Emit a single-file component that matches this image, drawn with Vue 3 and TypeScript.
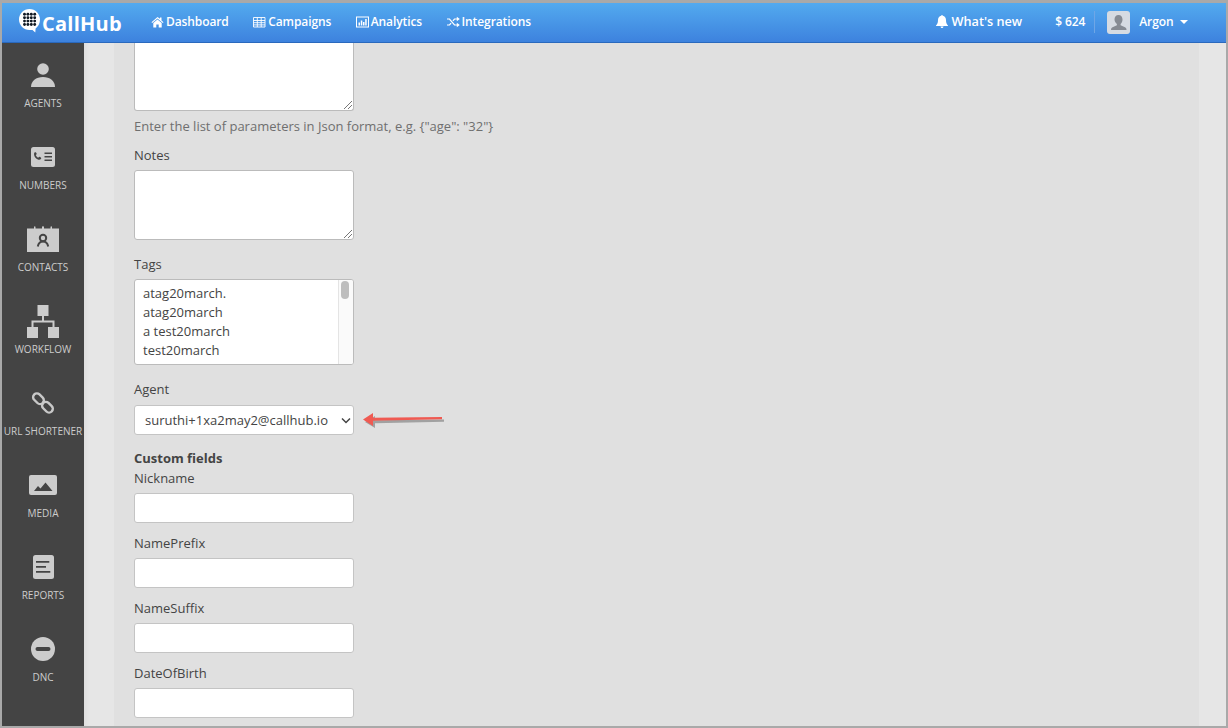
<script setup lang="ts">
const nav = [
  { label: 'Dashboard', icon: 'home' },
  { label: 'Campaigns', icon: 'table' },
  { label: 'Analytics', icon: 'chart' },
  { label: 'Integrations', icon: 'shuffle' },
]
const side = ['AGENTS', 'NUMBERS', 'CONTACTS', 'WORKFLOW', 'URL SHORTENER', 'MEDIA', 'REPORTS', 'DNC']
const tags = ['atag20march.', 'atag20march', 'a test20march', 'test20march']
const customFields = ['Nickname', 'NamePrefix', 'NameSuffix', 'DateOfBirth']
const dots = [0, 1, 2, 3]
</script>

<template>
  <div class="frame">
    <header class="topbar">
      <div class="logo">
        <svg class="logo-mark" width="22" height="24" viewBox="0 0 22 24">
          <path d="M10.500 0C4.700 0 0 4.700 0 10.500S4.700 21 10.500 21h3l2.800 2.600.3-4.100C19.200 17.600 21 14.300 21 10.500 21 4.700 16.300 0 10.500 0z" fill="#fff" />
          <g fill="#111a24">
            <template v-for="r in dots" :key="r">
              <circle v-for="c in dots" :key="c" :cx="5.500 + c * 3.400" :cy="5.300 + r * 3.400" r="1.450" />
            </template>
          </g>
        </svg>
        <span class="logo-text">CallHub</span>
      </div>
      <nav class="nav">
        <a v-for="n in nav" :key="n.label" class="nav-item">
          <svg width="13" height="12" viewBox="0 0 13 12" class="nav-icon">
            <path v-if="n.icon === 'home'" d="M6.500 1 0.500 6.200l.7.700 5.300-4.500 5.300 4.500.7-.7-2-1.700V1.500H9v1.300zM2.300 7v4.500h3V8.500h2.400v3h3V7L6.500 3.500z" fill="#fff" />
            <path v-else-if="n.icon === 'table'" d="M.5 1.500h11.500v9.500H.5zM.5 4.500h11.500M.5 6.700h11.500M.5 8.900h11.500M4.300 1.500V11M8.200 1.500V11" fill="none" stroke="#fff" stroke-width=".9" />
            <g v-else-if="n.icon === 'chart'">
              <rect x=".5" y="1" width="12" height="10" fill="none" stroke="#fff" />
              <path d="M2.500 6.500h1.500V9.500H2.500zM4.800 4.500h1.500V9.500H4.800zM7 6h1.500V9.500H7zM9.200 3h1.500V9.500H9.200z" fill="#fff" />
            </g>
            <g v-else>
              <path d="M0 3h2.500l5 6H10M0 9h2.500l1.600-1.900M5.900 4.900 7.500 3H10" fill="none" stroke="#fff" stroke-width="1.200" />
              <path d="M9.800 .8 12.800 3 9.800 5.200zM9.800 6.800 12.800 9 9.800 11.200z" fill="#fff" />
            </g>
          </svg>
          {{ n.label }}
        </a>
      </nav>
      <div class="right">
        <a class="whats">
          <svg width="12" height="13" viewBox="0 0 12 13">
            <path d="M6 0c.5 0 .8.300.8.800C8.800 1.200 10 2.800 10 5c0 3 .7 4 2 5.500V11H0v-.5C1.300 9 2 8 2 5 2 2.800 3.200 1.200 5.200.8 5.200.3 5.500 0 6 0zM4.500 11.500h3C7.500 12.400 6.800 13 6 13s-1.500-.6-1.500-1.500z" fill="#fff" />
          </svg>
          What's new
        </a>
        <span class="credit">$ 624</span>
        <span class="divider"></span>
        <span class="avatar">
          <svg width="23" height="23" viewBox="0 0 23 23">
            <rect width="23" height="23" rx="3" fill="#d6dbe2" />
            <path d="M11.500 4c2.500 0 4 1.800 4 4.500 0 2-1 3.600-1.900 4.500v1.300l4.400 2c1 .5 1.500 1.200 1.500 2.700H4c0-1.500.5-2.200 1.500-2.700l4.400-2V13C9 12.100 7.500 10.500 7.500 8.500 7.500 5.800 9 4 11.500 4z" fill="#868b93" />
          </svg>
        </span>
        <span class="user">Argon</span>
        <span class="caret"></span>
      </div>
    </header>

    <div class="body">
      <aside class="sidebar">
        <a v-for="s in side" :key="s" class="side-item">
          <span class="side-icon">
            <svg v-if="s === 'AGENTS'" width="24" height="24" viewBox="0 0 24 24">
              <circle cx="12" cy="6" r="5.800" fill="#ccc" />
              <path d="M0 24c0-6 5-10 12-10s12 4 12 10z" fill="#ccc" />
            </svg>
            <svg v-else-if="s === 'NUMBERS'" width="24" height="20" viewBox="0 0 24 20">
              <rect width="24" height="20" rx="2.500" fill="#ccc" />
              <path d="M3.500 5.500c.5-.5 1.100-.5 1.500 0l.6 1.100c.2.400.1.700-.2 1l-.6.500c.3 1.200 1.200 2.100 2.400 2.600l.7-.6c.3-.3.600-.3 1-.1l1 .6c.5.400.5.900 0 1.400-.8.800-1.800 1-3 .5C5 11.900 3.500 10.100 3.100 8c-.2-1 0-1.900.4-2.500z" fill="#444" />
              <path d="M13.500 5.500H21v1.400h-7.500zM13.500 9H21v1.400h-7.500zM13.500 12.500H21v1.400h-7.500z" fill="#444" />
            </svg>
            <svg v-else-if="s === 'CONTACTS'" width="32" height="26" viewBox="0 0 32 26">
              <path d="M0 2.500h7V1c0-1 1.500-1 1.500 0v1.500h6.500V1c0-1 2-1 2 0v1.500h6.500V1c0-1 1.500-1 1.500 0v1.500H32V26H0z" fill="#ccc" />
              <circle cx="16" cy="12" r="3.200" fill="none" stroke="#444" stroke-width="2" />
              <path d="M10.800 20.500c.6-3 2.200-5 5.200-5s4.600 2 5.200 5" fill="none" stroke="#444" stroke-width="2" />
            </svg>
            <svg v-else-if="s === 'WORKFLOW'" width="32" height="33" viewBox="0 0 32 33">
              <path d="M10.500 0h11v11h-11zM0 22h11v11H0zM21 22h11v11H21z" fill="#ccc" />
              <path d="M16 11v5.500M5.500 22v-5.500h21V22" fill="none" stroke="#ccc" stroke-width="2" />
            </svg>
            <svg v-else-if="s === 'URL SHORTENER'" width="24" height="24" viewBox="0 0 24 24">
              <g fill="none" stroke="#c8c8c8" stroke-width="2.400">
                <rect x="1.500" y="4" width="12" height="7.500" rx="3.700" transform="rotate(45 7.500 7.700)" />
                <rect x="10.500" y="12.500" width="12" height="7.500" rx="3.700" transform="rotate(45 16.500 16.200)" />
              </g>
            </svg>
            <svg v-else-if="s === 'MEDIA'" width="28" height="20" viewBox="0 0 28 20">
              <rect width="28" height="20" rx="2" fill="#ccc" />
              <path d="M5 16l4-5 2.500 2.500L16.500 7.500 23.500 16z" fill="#444" />
            </svg>
            <svg v-else-if="s === 'REPORTS'" width="21" height="24" viewBox="0 0 21 24">
              <rect width="21" height="24" rx="2.500" fill="#ccc" />
              <path d="M3 6h13.300v1.700H3zM3 11h10v1.700H3zM3 16h14.300v1.700H3z" fill="#444" />
            </svg>
            <svg v-else width="24" height="24" viewBox="0 0 24 24">
              <circle cx="12" cy="12" r="12" fill="#ccc" />
              <rect x="4.500" y="10" width="15" height="4" rx="2" fill="#444" />
            </svg>
          </span>
          <span class="side-label">{{ s }}</span>
        </a>
      </aside>

      <main class="gutter">
        <div class="panel">
          <div class="textarea clipped"><span class="grip"></span></div>
          <p class="hint">Enter the list of parameters in Json format, e.g. {"age": "32"}</p>

          <label class="label notes">Notes</label>
          <div class="textarea"><span class="grip"></span></div>

          <label class="label tags-label">Tags</label>
          <div class="multi">
            <div class="multi-list">
              <div v-for="t in tags" :key="t" class="opt">{{ t }}</div>
            </div>
            <div class="track"><span class="thumb"></span></div>
          </div>

          <label class="label agent-label">Agent</label>
          <div class="agent-row">
            <div class="select">
              <span>suruthi+1xa2may2@callhub.io</span>
              <svg width="11" height="7" viewBox="0 0 11 7"><path d="M2 1.500l4 4 4-4" fill="none" stroke="#444" stroke-width="1.500" /></svg>
            </div>
            <svg class="arrow" width="84" height="20" viewBox="0 0 84 20">
              <path d="M1 10.500 11 4.500V8.800L80 8V10.200L11 11.700V16.500z" fill="#555" opacity=".45" transform="translate(1 1.500)" />
              <path d="M0 9.500 10 3V7.700L79 7V9.200L10 10.700V16z" fill="#ef5a52" />
            </svg>
          </div>

          <h4 class="custom">Custom fields</h4>
          <template v-for="(f, i) in customFields" :key="f">
            <label class="label" :class="{ 'field-gap': i > 0 }">{{ f }}</label>
            <div class="input"></div>
          </template>
        </div>
      </main>
    </div>
  </div>
</template>

<style>
html, body { margin: 0; padding: 0; overflow: hidden; }
</style>

<style scoped>
.frame {
  width: 1228px;
  height: 728px;
  box-sizing: border-box;
  border: solid #a9a9a9;
  border-width: 3px 2px 2px 2px;
  display: flex;
  flex-direction: column;
  overflow: hidden;
  font-family: "Open Sans", "Liberation Sans", sans-serif;
  color: #444;
  background: #e6e6e6;
}
.topbar {
  height: 40px;
  flex: none;
  box-sizing: border-box;
  display: flex;
  align-items: center;
  color: #fff;
  background: linear-gradient(#53aaef, #3d82de);
  border-bottom: 1px solid #2a69bd;
  padding: 0 0 2px 17px;
}
.logo { display: flex; align-items: center; width: 132px; flex: none; }
.logo-mark { margin-top: -2px; }
.logo-text {
  font-size: 20px;
  font-weight: 700;
  letter-spacing: .25px;
  margin-top: 3px;
  margin-left: 1px;
}
.nav { display: flex; gap: 24.500px; font-size: 12px; letter-spacing: -.1px; font-weight: 600; }
.nav-item { display: flex; align-items: center; gap: 2px; white-space: nowrap; }
.right { margin-left: auto; display: flex; align-items: center; font-size: 12px; letter-spacing: -.1px; font-weight: 600; padding-right: 38px; }
.whats { display: flex; align-items: center; gap: 4px; font-size: 12.700px; letter-spacing: 0; margin-top: -1px; }
.credit { margin-left: 33px; }
.divider { width: 1px; height: 22px; background: #6ea6e6; margin: 0 12px 0 9px; }
.avatar { display: flex; margin-top: 1px; }
.user { margin-left: 9px; }
.caret {
  margin-left: 6.500px;
  width: 0;
  height: 0;
  border: 4px solid transparent;
  border-top-color: #fff;
  border-bottom-width: 0;
}
.body { flex: 1; display: flex; min-height: 0; }
.sidebar { width: 82px; flex: none; background: #444; }
.side-item {
  height: 82px;
  display: flex;
  flex-direction: column;
  align-items: center;
  position: relative;
}
.side-icon {
  height: 34px;
  margin-top: 15px;
  display: flex;
  align-items: center;
  justify-content: center;
}
.side-label {
  margin-top: 3px;
  font-size: 10px;
  line-height: 16px;
  color: #ccc;
  white-space: nowrap;
}
.gutter { flex: 1; padding: 0 27px 0 30px; min-width: 0; box-shadow: inset 6px 0 6px -6px #d6d6d6; }
.panel {
  height: 100%;
  background: #e0e0e0;
  padding-left: 20px;
  font-size: 13px;
  line-height: 20px;
  overflow: hidden;
}
.textarea {
  width: 220px;
  height: 70px;
  box-sizing: border-box;
  background: #fff;
  border: 1px solid #bbb;
  border-radius: 3px;
  position: relative;
}
.clipped { height: 68px; border-top: none; border-radius: 0 0 3px 3px; }
.grip {
  position: absolute;
  right: 1px;
  bottom: 1px;
  width: 8px;
  height: 8px;
  background: linear-gradient(135deg, transparent 45%, #777 45%, #777 55%, transparent 55%, transparent 70%, #777 70%, #777 80%, transparent 80%);
}
.hint { margin: 5px 0 0; color: #6f6f6f; line-height: 20px; white-space: nowrap; }
.label { display: block; color: #444; line-height: 20px; margin-bottom: 5px; }
.notes { margin-top: 9px; }
.tags-label { margin-top: 14px; }
.agent-label { margin-top: 14px; margin-bottom: 6px; }
.multi {
  width: 220px;
  height: 86px;
  box-sizing: border-box;
  background: #fff;
  border: 1px solid #bbb;
  border-radius: 3px;
  display: flex;
  overflow: hidden;
}
.multi-list { flex: 1; padding: 4px 0 0 8px; }
.opt { height: 19px; line-height: 19px; }
.track { width: 15px; box-sizing: border-box; background: #fafafa; border-left: 1px solid #e4e4e4; position: relative; }
.thumb {
  position: absolute;
  left: 2px;
  top: 1px;
  width: 8px;
  height: 18px;
  border-radius: 4px;
  background: #bdbdbd;
}
.agent-row { display: flex; align-items: center; }
.select {
  width: 220px;
  height: 30px;
  box-sizing: border-box;
  background: #fff;
  border: 1px solid #c4c4c4;
  border-radius: 3px;
  display: flex;
  align-items: center;
  justify-content: space-between;
  padding: 0 2px 0 10px;
  white-space: nowrap;
}
.arrow { margin-left: 9px; }
.custom { margin: 13px 0 0; font-size: 13px; font-weight: 700; line-height: 20px; color: #444; }
.input {
  width: 220px;
  height: 30px;
  box-sizing: border-box;
  background: #fff;
  border: 1px solid #c4c4c4;
  border-radius: 3px;
}
.field-gap { margin-top: 10px; }
</style>
